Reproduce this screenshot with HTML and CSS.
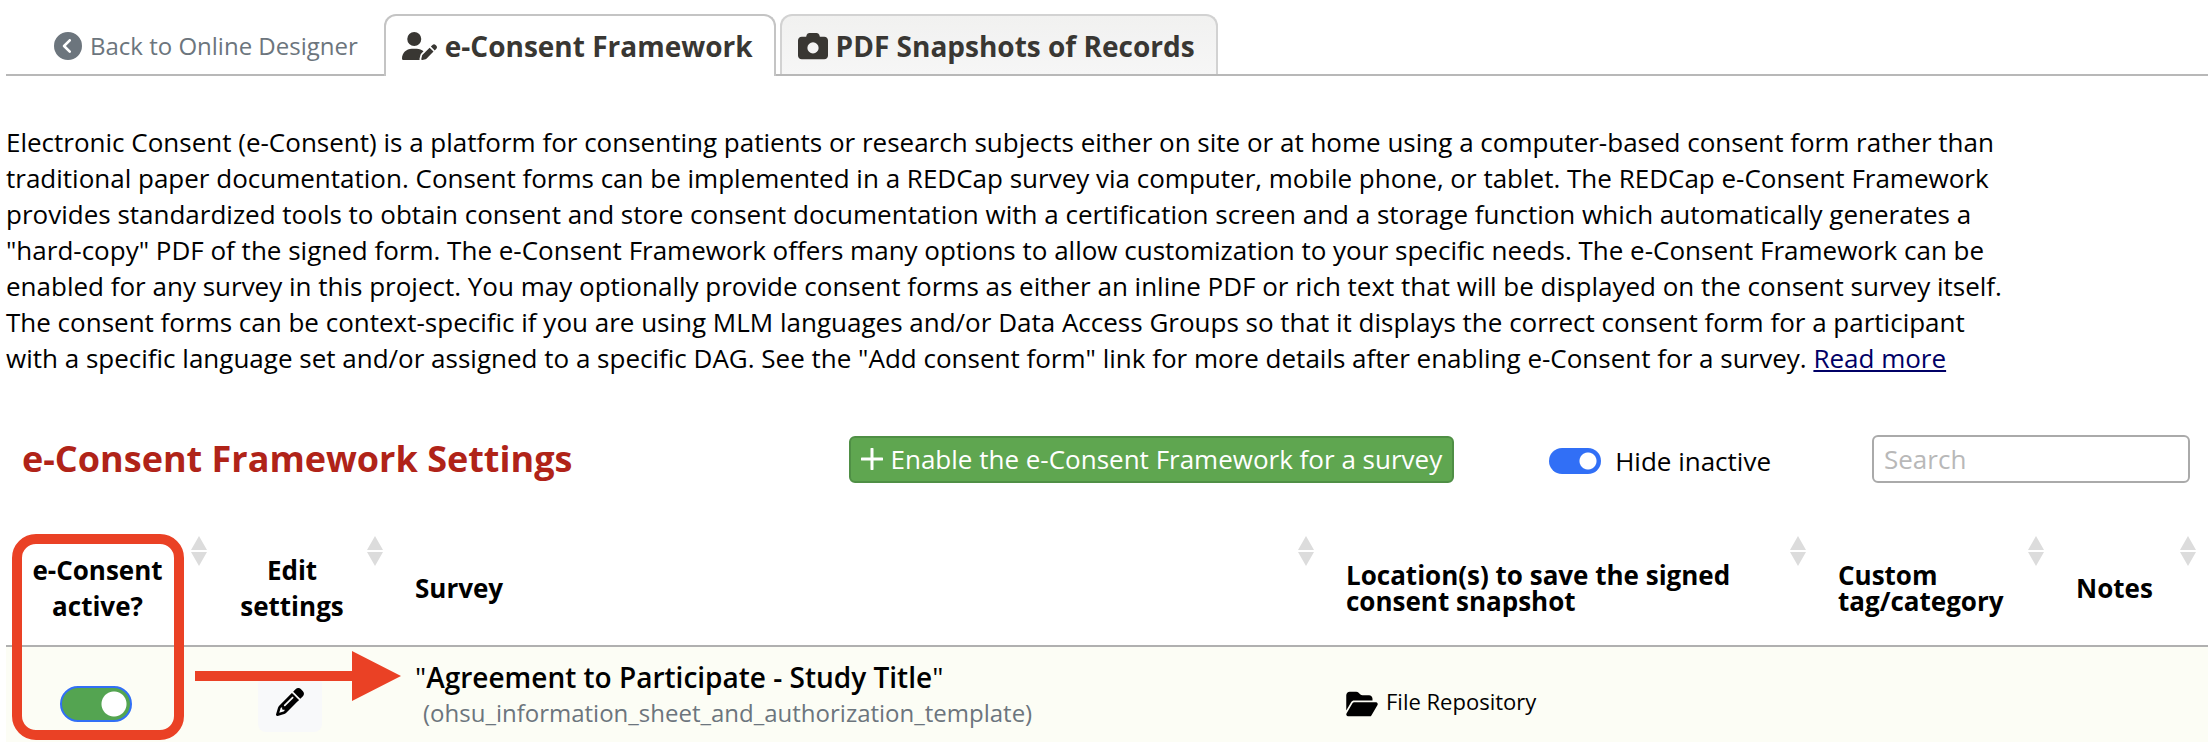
FILE: index.html
```html
<!DOCTYPE html>
<html lang="en">
<head>
<meta charset="utf-8">
<title>e-Consent Framework</title>
<link rel="stylesheet" href="styles.css">
</head>
<body>
<nav class="tabs">
  <a class="back" href="#"><svg class="icon icon-back" viewBox="0 0 512 512" aria-hidden="true"><path d="M512 256A256 256 0 1 0 0 256a256 256 0 1 0 512 0zM271 135c9.4-9.4 24.6-9.4 33.9 0s9.4 24.6 0 33.9l-87 87 87 87c9.4 9.4 9.4 24.6 0 33.9s-24.6 9.4-33.9 0L167 273c-9.4-9.4-9.4-24.6 0-33.9L271 135z"/></svg>Back to Online Designer</a>
  <a class="tab tab-active" href="#"><svg class="icon icon-user" viewBox="0 0 640 512" aria-hidden="true"><path d="M224 256A128 128 0 1 0 224 0a128 128 0 1 0 0 256zm-45.7 48C79.8 304 0 383.8 0 482.3C0 498.7 13.3 512 29.7 512H322.8c-3.1-8.8-3.7-18.4-1.4-27.8l15-60.1c2.8-11.3 8.6-21.5 16.8-29.7l40.3-40.3c-32.1-31-75.7-50.1-123.9-50.1H178.3zm435.5-68.3c-15.6-15.6-40.9-15.6-56.6 0l-29.4 29.4 71 71 29.4-29.4c15.6-15.6 15.6-40.9 0-56.6l-14.4-14.4zM375.9 417c-4.1 4.1-7 9.2-8.4 14.9l-15 60.1c-1.4 5.5 .2 11.2 4.2 15.2s9.7 5.6 15.2 4.2l60.1-15c5.6-1.4 10.8-4.3 14.9-8.4L576.1 358.7l-71-71L375.9 417z"/></svg>e-Consent Framework</a>
  <a class="tab" href="#"><svg class="icon icon-camera" viewBox="0 0 512 512" aria-hidden="true"><path d="M149.1 64.8L138.7 96H64C28.7 96 0 124.7 0 160V416c0 35.3 28.7 64 64 64H448c35.3 0 64-28.7 64-64V160c0-35.3-28.7-64-64-64H373.3L362.9 64.8C356.4 45.2 338.1 32 317.4 32H194.6c-20.7 0-39 13.2-45.5 32.8zM256 192a96 96 0 1 1 0 192 96 96 0 1 1 0-192z"/></svg>PDF Snapshots of Records</a>
</nav>

<p class="intro">Electronic Consent (e-Consent) is a platform for consenting patients or research subjects either on site or at home using a computer-based consent form rather than traditional paper documentation. Consent forms can be implemented in a REDCap survey via computer, mobile phone, or tablet. The REDCap e-Consent Framework provides standardized tools to obtain consent and store consent documentation with a certification screen and a storage function which automatically generates a "hard-copy" PDF of the signed form. The e-Consent Framework offers many options to allow customization to your specific needs. The e-Consent Framework can be enabled for any survey in this project. You may optionally provide consent forms as either an inline PDF or rich text that will be displayed on the consent survey itself. The consent forms can be context-specific if you are using MLM languages and/or Data Access Groups so that it displays the correct consent form for a participant with a specific language set and/or assigned to a specific DAG. See the "Add consent form" link for more details after enabling e-Consent for a survey. <a class="more" href="#">Read more</a></p>

<div class="toolbar">
  <h1 class="title">e-Consent Framework Settings</h1>
  <button class="enable" type="button"><svg class="icon icon-plus" viewBox="0 0 22 22" aria-hidden="true"><path d="M11 1v20M1 11h20"/></svg>Enable the e-Consent Framework for a survey</button>
  <label class="hide"><input class="switch" type="checkbox" checked>Hide inactive</label>
  <input class="search" type="search" placeholder="Search" aria-label="Search">
</div>

<main class="board">
  <table class="grid">
    <colgroup><col class="c-active"><col class="c-edit"><col><col class="c-location"><col class="c-tag"><col class="c-notes"></colgroup>
    <thead>
      <tr>
        <th class="mid" scope="col">e-Consent active?</th>
        <th class="mid" scope="col">Edit<br>settings</th>
        <th scope="col">Survey</th>
        <th class="tight" scope="col">Location(s) to save the signed consent snapshot</th>
        <th class="tight" scope="col">Custom tag/category</th>
        <th scope="col">Notes</th>
      </tr>
    </thead>
    <tbody>
      <tr>
        <td class="mid"><input class="switch switch-large" type="checkbox" checked aria-label="e-Consent active"></td>
        <td class="mid"><button class="edit" type="button" aria-label="Edit settings"><svg class="icon icon-pencil" viewBox="0 0 512 512" aria-hidden="true"><path d="M410.3 231l11.3-11.3-33.9-33.9-62.1-62.1L291.7 89.8l-11.3 11.3-22.6 22.6L58.6 322.9c-10.4 10.4-18 23.3-22.2 37.4L1 480.7c-2.5 8.4-.2 17.5 6.1 23.7s15.3 8.5 23.7 6.1l120.3-35.4c14.1-4.2 27-11.8 37.4-22.2L387.7 253.7 410.3 231zM160 399.4l-9.1 22.7c-4 3.1-8.5 5.4-13.3 6.9L59.4 452l23-78.1c1.4-4.9 3.8-9.4 6.9-13.3l22.7-9.1v32c0 8.8 7.2 16 16 16h32zM362.7 18.7L348.3 33.2 325.7 55.8 314.3 67.1l33.9 33.9 62.1 62.1 33.9 33.9 11.3-11.3 22.6-22.6 14.5-14.5c25-25 25-65.5 0-90.5L453.3 18.7c-25-25-65.5-25-90.5 0zm-47.4 168l-144 144c-6.2 6.2-16.4 6.2-22.6 0s-6.2-16.4 0-22.6l144-144c6.2-6.2 16.4-6.2 22.6 0s6.2 16.4 0 22.6z"/></svg></button></td>
        <td class="survey"><div class="survey-name">"<b>Agreement to Participate - Study Title</b>"</div><div class="survey-form">(ohsu_information_sheet_and_authorization_template)</div></td>
        <td class="location"><svg class="icon icon-folder" viewBox="0 0 576 512" aria-hidden="true"><path d="M88.7 223.8L0 375.8V96C0 60.7 28.7 32 64 32H181.5c17 0 33.3 6.7 45.3 18.7l26.5 26.5c12 12 28.3 18.7 45.3 18.7H416c35.3 0 64 28.7 64 64v32H144c-22.8 0-43.8 12.1-55.3 31.8zm27.6 16.1C122.1 230 132.6 224 144 224H544c11.5 0 22 6.1 27.7 16.1s5.7 22.2-.1 32.1l-112 192C453.9 474 443.4 480 432 480H32c-11.5 0-22-6.1-27.7-16.1s-5.7-22.2 .1-32.1l112-192z"/></svg>File Repository</td>
        <td></td>
        <td></td>
      </tr>
    </tbody>
  </table>
  <div class="callout"></div>
  <svg class="arrow" viewBox="0 0 206 50" aria-hidden="true"><path d="M0 20h157V0l49 25-49 25V30H0z"/></svg>
</main>
</body>
</html>
```
FILE: styles.css
```css
* {
  box-sizing: border-box;
}

body {
  margin: 0;
  padding: 14px 0 0 6px;
  background: #fff;
  color: #000;
  font-family: "Open Sans", "Noto Sans", sans-serif;
  font-size: 26px;
  line-height: 36px;
}

.icon {
  flex: none;
  fill: currentColor;
}

/* Tabs */
.tabs {
  display: flex;
  height: 62px;
  border-bottom: 2px solid #b8b8b8;
}

.back,
.tab {
  display: flex;
  align-items: center;
  text-decoration: none;
  white-space: nowrap;
}

.back {
  gap: 8px;
  margin-right: 26px;
  padding: 4px 0 0 48px;
  color: #6c757d;
  font-size: 24px;
}

.icon-back {
  width: 28px;
  height: 28px;
}

.tab {
  gap: 8px;
  height: 60px;
  margin-right: 4px;
  padding: 2px 21px 0 16px;
  border: 2px solid #d2d2d2;
  border-bottom: 0;
  border-radius: 12px 12px 0 0;
  background: linear-gradient(#f1f1f0, #f6f6f6);
  color: #393733;
  font-size: 28px;
  font-weight: 700;
}

.tab-active {
  height: 62px;
  padding-bottom: 2px;
  border-color: #c4c4c4;
  background: #fff;
}

.icon-user {
  width: 35px;
  height: 28px;
}

.icon-camera {
  width: 30px;
  height: 30px;
}

.intro {
  max-width: 2010px;
  margin: 48px 0 0;
}

.more {
  color: #000066;
}

/* Toolbar */
.toolbar {
  display: flex;
  align-items: center;
  height: 48px;
  margin-top: 59px;
  padding: 0 18px 0 16px;
}

.title {
  margin: 0;
  color: #b02318;
  font-size: 36px;
  font-weight: 700;
}

.enable {
  display: flex;
  align-items: center;
  gap: 8px;
  height: 47px;
  margin-left: auto;
  padding: 0 10px;
  border: 2px solid #4f8f45;
  border-radius: 6px;
  background: #5fa650;
  color: #fff;
  font: inherit;
}

.icon-plus {
  width: 22px;
  height: 22px;
  stroke: currentColor;
  stroke-width: 3;
  stroke-linecap: round;
}

.hide {
  display: flex;
  align-items: center;
  gap: 14px;
  margin: 4px 101px 0 95px;
}

.switch {
  appearance: none;
  width: 52px;
  height: 26px;
  margin: 0;
  border-radius: 18px;
  background: radial-gradient(circle at 39px 13px, #fff 8px, #316ff6 9px);
}

.switch-large {
  width: 72px;
  height: 36px;
  border: 2px solid #316ff6;
  background: radial-gradient(circle at 52px 16px, #fff 12px, #54a451 13px);
}

.search {
  width: 318px;
  height: 48px;
  padding: 0 10px;
  border: 2px solid #aaa;
  border-radius: 6px;
  background: #fff;
  font: inherit;
}

.search::placeholder {
  color: #b8b8b8;
}

/* Settings table */
.board {
  position: relative;
  margin-top: 47px;
}

.grid {
  width: 100%;
  border-collapse: collapse;
  table-layout: fixed;
}

.c-active { width: 213px; }
.c-edit { width: 176px; }
.c-location { width: 492px; }
.c-tag { width: 238px; }
.c-notes { width: 152px; }

th {
  height: 116px;
  padding: 0 50px 0 20px;
  border-bottom: 2px solid #b0b0b0;
  background: url("data:image/svg+xml,%3Csvg xmlns='http://www.w3.org/2000/svg' width='16' height='30'%3E%3Cpath d='M8 0l8 14H0zM0 16h16l-8 14z' fill='%23dcdcdc'/%3E%3C/svg%3E") no-repeat right 12px top 6px;
  font-weight: 700;
  text-align: left;
}

.tight {
  line-height: 26px;
}

td {
  height: 96px;
  padding: 12px 20px 0 20px;
  background: #fcfdf5;
  vertical-align: middle;
}

.mid {
  text-align: center;
}

td.mid {
  padding: 18px 54px 0 20px;
  line-height: 0;
}

.edit {
  width: 64px;
  height: 56px;
  padding: 0;
  border: 0;
  border-radius: 8px;
  background: #f8f9fa;
  color: #000;
}

.icon-pencil {
  width: 28px;
  height: 28px;
}

td.survey {
  padding: 0 20px;
}

.survey-name {
  font-size: 28px;
}

.survey-name b {
  font-weight: 600;
}

.survey-form {
  padding-left: 8px;
  color: #6c757d;
  font-size: 24px;
}

.location {
  font-size: 22px;
}

.icon-folder {
  width: 32px;
  height: 28px;
  margin-right: 8px;
  vertical-align: middle;
}

/* Annotations drawn over the table */
.callout {
  position: absolute;
  top: 4px;
  left: 6px;
  width: 172px;
  height: 206px;
  border: 10px solid #ea4125;
  border-radius: 24px;
}

.arrow {
  position: absolute;
  top: 121px;
  left: 189px;
  width: 206px;
  height: 50px;
  fill: #ea4125;
}
```
